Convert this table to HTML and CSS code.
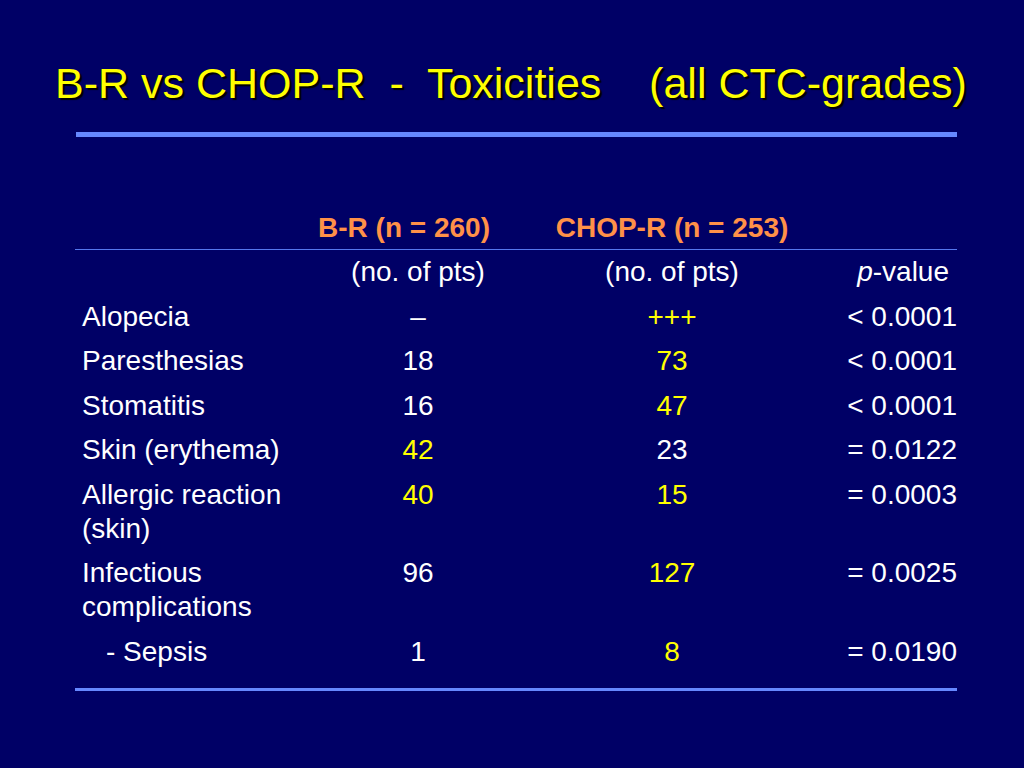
FILE: index.html
```html
<!DOCTYPE html>
<html>
<head>
<meta charset="utf-8">
<link rel="stylesheet" href="styles.css">
</head>
<body>
<div class="slide">
  <h1 class="title">B-R vs CHOP-R  -  Toxicities    (all CTC-grades)</h1>
  <div class="rule"></div>
  <div class="table">
    <div class="head"></div>
    <div class="head c1 br-head">B-R (n = 260)</div>
    <div class="head c2">CHOP-R (n = 253)</div>
    <div class="head"></div>

    <div class="cell"></div>
    <div class="cell c1">(no. of pts)</div>
    <div class="cell c2">(no. of pts)</div>
    <div class="cell p pv"><i>p</i>-value</div>

    <div class="cell label">Alopecia</div>
    <div class="cell c1">–</div>
    <div class="cell c2 hi">+++</div>
    <div class="cell p">&lt; 0.0001</div>

    <div class="cell label">Paresthesias</div>
    <div class="cell c1">18</div>
    <div class="cell c2 hi">73</div>
    <div class="cell p">&lt; 0.0001</div>

    <div class="cell label">Stomatitis</div>
    <div class="cell c1">16</div>
    <div class="cell c2 hi">47</div>
    <div class="cell p">&lt; 0.0001</div>

    <div class="cell label">Skin (erythema)</div>
    <div class="cell c1 hi">42</div>
    <div class="cell c2">23</div>
    <div class="cell p">= 0.0122</div>

    <div class="cell label">Allergic reaction (skin)</div>
    <div class="cell c1 hi">40</div>
    <div class="cell c2 hi">15</div>
    <div class="cell p">= 0.0003</div>

    <div class="cell label">Infectious complications</div>
    <div class="cell c1">96</div>
    <div class="cell c2 hi">127</div>
    <div class="cell p">= 0.0025</div>

    <div class="cell label sub">- Sepsis</div>
    <div class="cell c1">1</div>
    <div class="cell c2 hi">8</div>
    <div class="cell p">= 0.0190</div>
  </div>
</div>
</body>
</html>
```

FILE: styles.css
```css
html, body {
  margin: 0;
  padding: 0;
  background: #000066;
}
.slide {
  width: 1024px;
  height: 768px;
  background: #000066;
  font-family: "Liberation Sans", Arial, sans-serif;
  color: #ffffff;
  overflow: hidden;
  padding-top: 58px;
  box-sizing: border-box;
}
.title {
  margin: 0 0 0 55px;
  font-weight: normal;
  font-size: 43px;
  line-height: 50px;
  color: #ffff00;
  white-space: pre;
  text-shadow: 2px 2px 1px #000000;
}
.rule {
  margin: 24px 0 0 76px;
  width: 881px;
  height: 5px;
  background: #6688ff;
}
.table {
  margin: 74px 0 0 75px;
  width: 882px;
  display: grid;
  grid-template-columns: 222px 242px 266px 152px;
  font-size: 28px;
  line-height: 34px;
  padding-bottom: 14px;
  border-bottom: 3px solid #6688ff;
}
.head {
  font-weight: bold;
  color: #ff9148;
  padding: 0 0 4px;
  border-bottom: 1px solid #5577ee;
}
.cell {
  padding: 5px 0 5.5px;
}
.c1, .c2 {
  text-align: center;
}
.br-head {
  padding-right: 28px;
}
.label {
  padding-left: 7px;
  padding-right: 8px;
}
.sub {
  padding-left: 31px;
}
.p {
  text-align: right;
}
.pv {
  padding-right: 8px;
}
.hi {
  color: #ffff00;
}
```
